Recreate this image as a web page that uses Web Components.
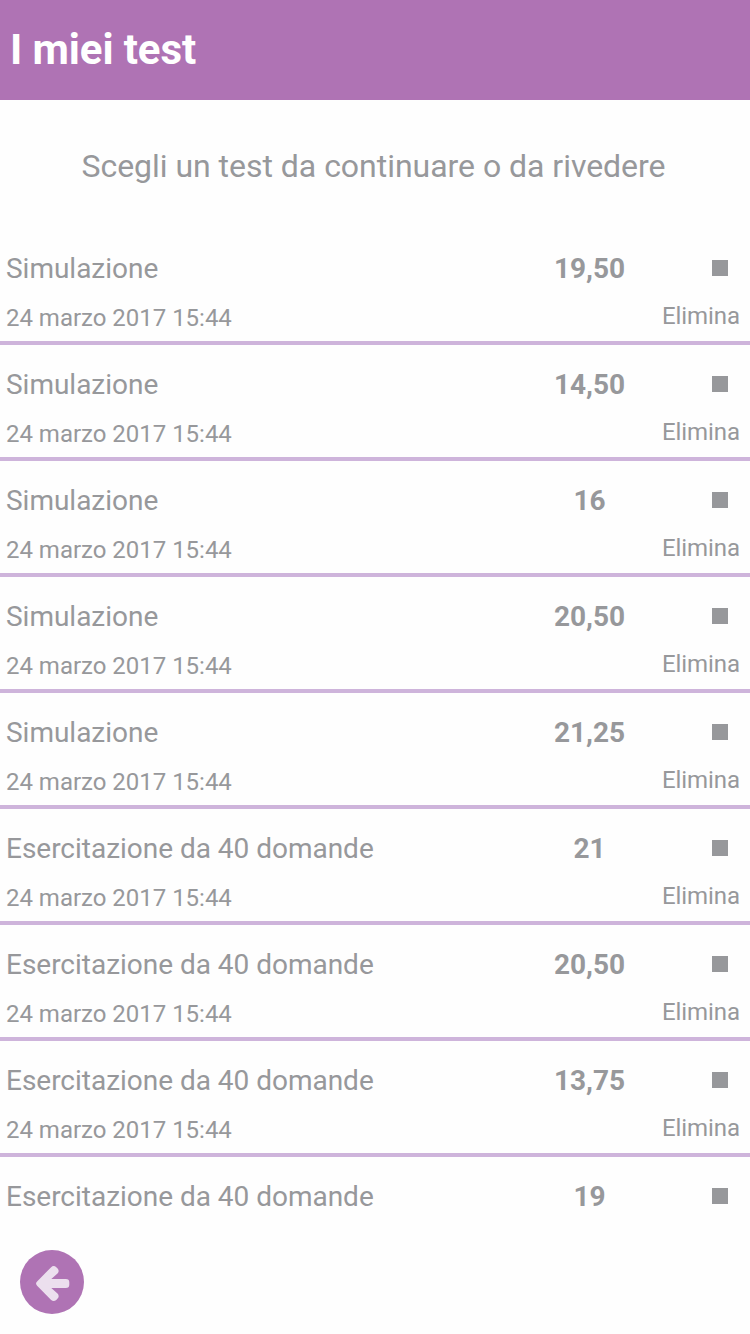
<!DOCTYPE html>
<html lang="it">
<head>
<meta charset="utf-8">
<title>I miei test</title>
<style>
	body {
		margin: 0;
		background: #fefefe;
		font-family: Roboto, "Liberation Sans", sans-serif;
	}
</style>
</head>
<body>
<test-app></test-app>
<script>
class TestHeader extends HTMLElement {
	constructor() {
		super().attachShadow({ mode: 'open' });
		this.shadowRoot.innerHTML = /*html*/ `
			<style>
				:host {
					display: flex;
					align-items: center;
					flex: none;
					height: 100px;
					padding: 0 10px;
					box-sizing: border-box;
					background: #af73b4;
					color: #fff;
				}
				h1 {
					margin: 0;
					font-size: 42px;
					line-height: 50px;
					font-weight: 700;
					letter-spacing: -0.1px;
				}
			</style>
			<h1><slot></slot></h1>
		`;
	}
}

class TestRow extends HTMLElement {
	constructor() {
		super().attachShadow({ mode: 'open' });
		this.shadowRoot.innerHTML = /*html*/ `
			<style>
				:host {
					display: flex;
					height: 116px;
					flex: none;
					box-sizing: border-box;
					border-bottom: 4px solid #ceb4db;
					padding: 22px 10px 0 6px;
					color: #97989b;
				}
				/* only the first line fits above the footer */
				:host([partial]) { height: 64px; border: 0; }
				:host([partial]) .date,
				:host([partial]) .delete { display: none; }
				.info { flex: none; width: 514px; }
				.name { font-size: 28px; line-height: 36px; letter-spacing: -0.02px; }
				.date { font-size: 24px; line-height: 30px; margin-top: 16px; letter-spacing: -0.02px; }
				.score { flex: none; width: 139px; text-align: center; font-size: 28px; line-height: 36px; font-weight: 700; }
				.actions { flex: 1; display: flex; flex-direction: column; align-items: flex-end; }
				.mark { width: 16px; height: 16px; margin: 9px 12px 0 0; background: #97989b; }
				.delete { font-size: 24px; line-height: 30px; margin-top: 25px; letter-spacing: -0.08px; white-space: nowrap; }
			</style>
			<div class="info">
				<div class="name"></div>
				<div class="date"></div>
			</div>
			<div class="score"></div>
			<div class="actions">
				<span class="mark"></span>
				<span class="delete">Elimina</span>
			</div>
		`;
	}

	static get observedAttributes() {
		return ['name', 'date', 'score'];
	}

	attributeChangedCallback(name, oldValue, newValue) {
		this.shadowRoot.querySelector('.' + name).textContent = newValue;
	}
}

class BackButton extends HTMLElement {
	constructor() {
		super().attachShadow({ mode: 'open' });
		this.shadowRoot.innerHTML = /*html*/ `
			<style>
				:host { display: block; width: 64px; height: 64px; }
				button {
					display: block;
					width: 64px;
					height: 64px;
					padding: 0;
					border: 0;
					border-radius: 50%;
					background: #af73b4;
				}
				svg { display: block; }
			</style>
			<button aria-label="Indietro">
				<svg width="64" height="64" viewBox="0 0 64 64" fill="#ecdfee">
					<path d="M17.1 31.4 L30.9 17.4 Q33.6 14.7 36.3 17.2 L37.6 18.5 Q39.8 21 37.5 23.6 L31.3 29 H45.8 Q49.3 29 49.3 32.2 V34.8 Q49.3 38 45.8 38 H31.3 L37.5 43.6 Q39.8 46.1 37.6 48.6 L36.3 49.9 Q33.6 52.3 30.9 49.7 L17.1 35.7 Q15 33.5 17.1 31.4 Z"/>
				</svg>
			</button>
		`;
	}
}

class TestApp extends HTMLElement {
	constructor() {
		super().attachShadow({ mode: 'open' });
		this.shadowRoot.innerHTML = /*html*/ `
			<style>
				:host { display: flex; flex-direction: column; height: 1334px; overflow: hidden; }
				p {
					flex: none;
					margin: 0;
					padding: 46px 3px 43px 0;
					font-size: 32px;
					line-height: 40px;
					letter-spacing: -0.03px;
					text-align: center;
					color: #97989b;
				}
				.list { flex: 1; min-height: 0; overflow: hidden; display: flex; flex-direction: column; }
				footer { flex: none; display: flex; padding: 20px; }
			</style>
			<test-header>I miei test</test-header>
			<p>Scegli un test da continuare o da rivedere</p>
			<div class="list"></div>
			<footer><back-button></back-button></footer>
		`;
	}

	connectedCallback() {
		const list = this.shadowRoot.querySelector('.list');
		TESTS.forEach(([name, score]) => {
			const row = document.createElement('test-row');
			row.setAttribute('name', name);
			row.setAttribute('date', '24 marzo 2017 15:44');
			row.setAttribute('score', score);
			list.append(row);
		});
		list.lastElementChild.setAttribute('partial', '');
	}
}

const TESTS = [
	['Simulazione', '19,50'],
	['Simulazione', '14,50'],
	['Simulazione', '16'],
	['Simulazione', '20,50'],
	['Simulazione', '21,25'],
	['Esercitazione da 40 domande', '21'],
	['Esercitazione da 40 domande', '20,50'],
	['Esercitazione da 40 domande', '13,75'],
	['Esercitazione da 40 domande', '19'],
];

customElements.define('test-header', TestHeader);
customElements.define('test-row', TestRow);
customElements.define('back-button', BackButton);
customElements.define('test-app', TestApp);
</script>
</body>
</html>
